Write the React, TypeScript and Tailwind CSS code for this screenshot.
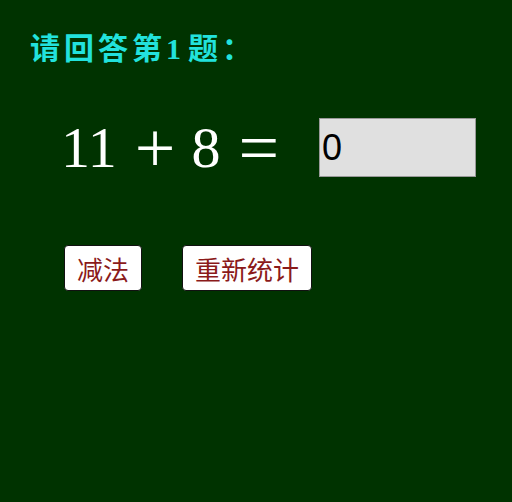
export default function App() {
  return (
    <div className="w-[512px] h-[502px] bg-[#003300] pt-[28px] pl-[30px]">
      <h1
        className="text-[30px] leading-[42px] font-semibold text-[#22e2dc] tracking-[4px]"
        style={{ fontFamily: '"Liberation Serif", "Noto Sans CJK SC", serif' }}
      >
        请回答第<span className="pr-[3px]">1</span>题：
      </h1>

      <div className="flex items-center h-[59px] mt-[48px] ml-[31px]">
        <div
          className="flex items-center text-white text-[58px] leading-none w-[258px]"
          style={{ fontFamily: '"Liberation Serif", serif' }}
        >
          <span>11</span>
          <span className="ml-[18px] text-[72px] font-light">+</span>
          <span className="ml-[16px]">8</span>
          <span className="ml-[18px] text-[72px] font-light">=</span>
        </div>
        <input
          defaultValue="0"
          className="w-[157px] h-[59px] bg-[#e0e0e0] border border-[#999] px-[2px] text-[36px] text-black outline-none"
          style={{ fontFamily: '"Liberation Sans", sans-serif' }}
        />
      </div>

      <div className="flex gap-[40px] mt-[68px] ml-[34px]">
        <button
          className="h-[46px] px-[12px] bg-white border border-[#111] rounded-[4px] text-[26px] text-[#8b1a1a]"
          style={{ fontFamily: '"Noto Sans CJK SC", sans-serif' }}
        >
          减法
        </button>
        <button
          className="h-[46px] px-[12px] bg-white border border-[#111] rounded-[4px] text-[26px] text-[#8b1a1a]"
          style={{ fontFamily: '"Noto Sans CJK SC", sans-serif' }}
        >
          重新统计
        </button>
      </div>
    </div>
  )
}
